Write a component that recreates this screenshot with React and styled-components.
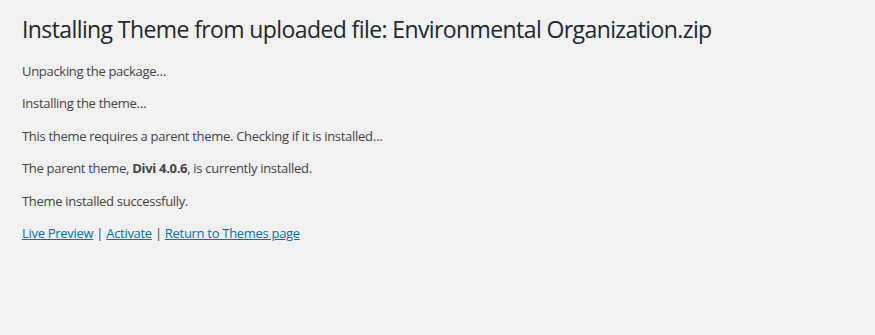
import React from "react"
import styled, { createGlobalStyle } from "styled-components"

const GlobalStyle = createGlobalStyle`
  html, body {
    margin: 0;
    background: #f1f1f1;
  }
  body {
    font-family: "Open Sans", "Noto Sans", sans-serif;
    font-size: 13px;
    line-height: 1.4em;
    color: #444;
  }
`

const Wrap = styled.div`
  padding: 6px 20px 0 22px;
`

const Title = styled.h1`
  font-size: 23px;
  font-weight: 400;
  margin: 0;
  padding: 9px 0 4px;
  line-height: 1.3;
  color: #23282d;
  letter-spacing: -0.6px;
`

const Message = styled.p`
  font-size: 13px;
  line-height: 1.5;
  margin: 1em 0;
  letter-spacing: -0.3px;
`

const ActionLink = styled.a`
  color: #0073aa;
  text-decoration: underline;
`

const App = () => (
  <>
    <GlobalStyle />
    <Wrap>
      <Title>Installing Theme from uploaded file: Environmental Organization.zip</Title>
      <Message>Unpacking the package…</Message>
      <Message>Installing the theme…</Message>
      <Message>This theme requires a parent theme. Checking if it is installed…</Message>
      <Message>
        The parent theme, <strong>Divi 4.0.6</strong>, is currently installed.
      </Message>
      <Message>Theme installed successfully.</Message>
      <Message>
        <ActionLink href="#">Live Preview</ActionLink> |{" "}
        <ActionLink href="#">Activate</ActionLink> |{" "}
        <ActionLink href="#">Return to Themes page</ActionLink>
      </Message>
    </Wrap>
  </>
)

export default App
